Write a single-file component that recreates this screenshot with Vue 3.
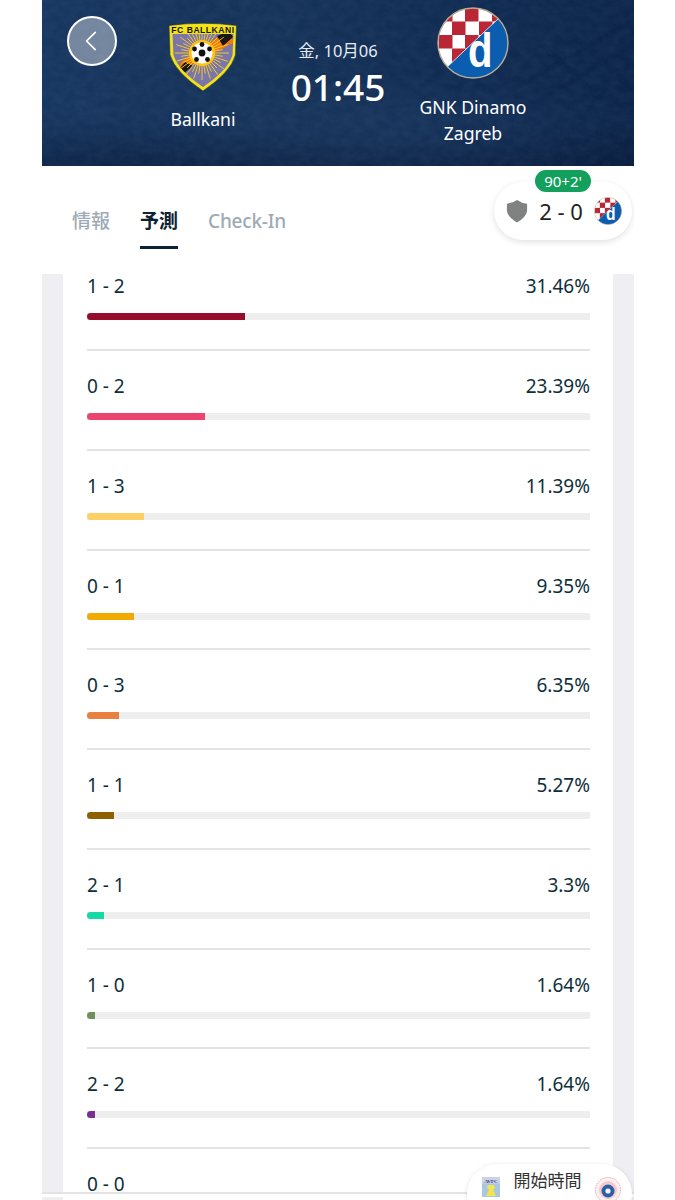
<script setup>
const rows = [
  { score: '1 - 2', pct: 31.46, color: '#970c2c' },
  { score: '0 - 2', pct: 23.39, color: '#ed436f' },
  { score: '1 - 3', pct: 11.39, color: '#ffcf66' },
  { score: '0 - 1', pct: 9.35, color: '#f2a900' },
  { score: '0 - 3', pct: 6.35, color: '#ea8040' },
  { score: '1 - 1', pct: 5.27, color: '#8e6000' },
  { score: '2 - 1', pct: 3.3, color: '#17d9a5' },
  { score: '1 - 0', pct: 1.64, color: '#6c9259' },
  { score: '2 - 2', pct: 1.64, color: '#7b2d94' },
  { score: '0 - 0', pct: 1.2, color: '#888888' }
]
const rays = Array.from({ length: 40 }, (_, i) => {
  const a = (i / 40) * Math.PI * 2
  const r = i % 2 ? 21 : 27
  return {
    x1: 51 + Math.cos(a) * 9,
    y1: 43 + Math.sin(a) * 9,
    x2: 51 + Math.cos(a) * r,
    y2: 43 + Math.sin(a) * r
  }
})
const redCells = [
  [2, 1], [28, 1], [55, 1], [15, 14.5], [42, 14.5], [2, 28], [28, 28], [15, 41.5]
]
</script>

<template>
  <div class="page">
    <header class="hero">
      <svg class="hero-bg" viewBox="0 0 592 166" preserveAspectRatio="none" aria-hidden="true">
        <defs>
          <filter id="grain" x="0" y="0" width="100%" height="100%">
            <feTurbulence type="fractalNoise" baseFrequency="0.09 0.13" numOctaves="4" seed="7" />
            <feColorMatrix values="0 0 0 0 0.55  0 0 0 0 0.68  0 0 0 0 0.9  0.5 0 0 0 -0.12" />
          </filter>
          <filter id="soft"><feGaussianBlur stdDeviation="1.4" /></filter>
        </defs>
        <rect width="592" height="166" filter="url(#grain)" opacity="0.16" />
        <g class="truss" filter="url(#soft)">
          <path d="M470 90 L592 20 M480 110 L592 44 M500 45 L560 100 M530 35 L592 90" />
        </g>
      </svg>

      <button class="back" aria-label="back">
        <svg viewBox="0 0 24 24" width="26" height="26">
          <path d="M15 4 L7 12 L15 20" fill="none" stroke="#fff" stroke-width="1.6" stroke-linecap="round" stroke-linejoin="round" />
        </svg>
      </button>

      <div class="team">
        <svg class="crest-b" viewBox="18 11 68 70" width="68" height="70">
          <defs>
            <clipPath id="shieldBody">
              <path d="M21.5 24 L82.5 24 L81.5 45 Q77 60 52 77 Q27 60 22.5 45 Z" />
            </clipPath>
          </defs>
          <path d="M18 15.5 Q52 11 85.5 15.5 L84.5 45 Q80 62 52 81 Q24 62 19 45 Z" fill="#f2e21a" stroke="#1d2c3a" stroke-width="0.6" />
          <g clip-path="url(#shieldBody)">
            <rect x="18" y="20" width="68" height="62" fill="#7a75aa" />
            <path d="M26 62 L30 52 L74 22 L84 32 Z" fill="#ef7a12" />
            <path d="M27 60 L34 52 L42 56 L32 64 Z M66 26 L78 21 L82 27 L72 36 Z" fill="#1b1712" />
            <g stroke="#ffd21f" stroke-width="0.9">
              <line v-for="(r, i) in rays" :key="i" :x1="r.x1" :y1="r.y1" :x2="r.x2" :y2="r.y2" />
            </g>
            <circle cx="51" cy="43" r="13" fill="#ffc313" />
          </g>
          <circle cx="51" cy="43" r="10.5" fill="#fff" />
          <circle cx="51" cy="43" r="3.4" fill="#111" />
          <g fill="#111">
            <circle cx="51" cy="34.5" r="2.4" />
            <circle cx="43.5" cy="39" r="2.4" />
            <circle cx="58.5" cy="39" r="2.4" />
            <circle cx="45.5" cy="49.5" r="2.4" />
            <circle cx="56.5" cy="49.5" r="2.4" />
          </g>
          <text x="52" y="22.5" text-anchor="middle" class="crest-text">FC BALLKANI</text>
        </svg>
        <div class="team-name">Ballkani</div>
      </div>

      <div class="kickoff">
        <div class="date">金, 10月06</div>
        <div class="time">01:45</div>
      </div>

      <div class="team">
        <svg class="crest-d" viewBox="0 0 72 72" width="72" height="72">
          <defs>
            <clipPath id="dCircle"><circle cx="36" cy="36" r="35" /></clipPath>
          </defs>
          <g id="dinamoMark">
            <g clip-path="url(#dCircle)">
              <rect width="72" height="72" fill="#fff" />
              <rect v-for="(c, i) in redCells" :key="i" :x="c[0]" :y="c[1]" width="13.5" height="13.5" fill="#b92635" />
              <path d="M8 62 L62 11 L76 20 L76 76 L8 76 Z" fill="#0b5db0" />
              <path d="M8 62 L62 11" stroke="#fff" stroke-width="0.8" />
            </g>
            <circle cx="36" cy="36" r="35" fill="none" stroke="#b9ab90" stroke-width="1.4" />
            <text class="d-letter" transform="translate(31 59.5) scale(0.82 1)">d</text>
          </g>
        </svg>
        <div class="team-name">GNK Dinamo<br />Zagreb</div>
      </div>
    </header>

    <nav class="tabs">
      <a class="tab">情報</a>
      <a class="tab active">予測</a>
      <a class="tab latin">Check-In</a>
    </nav>

    <div class="score-pill">
      <span class="minute">90+2'</span>
      <svg viewBox="0 0 24 26" width="22" height="24">
        <path d="M12 1 Q17 4.5 23 5 L23 13 Q22 20 12 25.5 Q2 20 1 13 L1 5 Q7 4.5 12 1 Z" fill="#808282" />
      </svg>
      <span class="score">2 - 0</span>
      <svg viewBox="0 0 72 72" width="28" height="28">
        <use href="#dinamoMark" />
      </svg>
    </div>

    <section class="list">
      <div class="card">
        <div v-for="row in rows" :key="row.score" class="row">
          <span>{{ row.score }}</span>
          <span v-if="row.score !== '0 - 0'">{{ row.pct }}%</span>
          <div class="track">
            <div class="fill" :style="{ width: row.pct + '%', background: row.color }"></div>
          </div>
        </div>
      </div>
    </section>
    <div class="foot-line"></div>
    <div class="foot-strip"><div class="foot-card"></div></div>

    <div class="start-pill">
      <svg viewBox="0 0 18 20" width="18" height="20">
        <rect width="18" height="20" fill="#a9c6e2" />
        <rect width="18" height="6.5" fill="#c9d4e8" />
        <text x="9" y="5.5" text-anchor="middle" class="avfc">AVFC</text>
        <path d="M6 8 L12 8 L13 11 L11 13 L14 19 L4 19 L7 13 L5 11 Z" fill="#f4e548" />
      </svg>
      <span class="start-text">開始時間</span>
      <svg viewBox="0 0 26 26" width="26" height="26">
        <circle cx="13" cy="13" r="12.5" fill="#fbeff0" stroke="#e3a6ac" stroke-dasharray="1.5 1" />
        <circle cx="13" cy="13" r="9" fill="#f3c9cd" />
        <circle cx="13" cy="14" r="6.5" fill="#2b5fa8" />
        <circle cx="13" cy="14" r="2.6" fill="#f4f4f4" />
      </svg>
    </div>
  </div>
</template>

<style scoped>
.page {
  position: relative;
  width: 592px;
  height: 1200px;
  margin-left: 42px;
  overflow: hidden;
  background: #fff;
  font-family: "Noto Sans", "Noto Sans CJK JP", sans-serif;
}
.hero {
  position: relative;
  height: 166px;
  box-sizing: border-box;
  padding-bottom: 13px;
  display: flex;
  justify-content: center;
  align-items: center;
  color: #fff;
  overflow: hidden;
  background:
    radial-gradient(ellipse 260px 60px at 60% 135px, rgba(40, 72, 116, 0.3), transparent),
    linear-gradient(180deg, transparent 72%, rgba(6, 22, 52, 0.5) 100%),
    linear-gradient(100deg, #173660 0%, #153258 40%, #102b52 70%, #0c2448 100%);
}
.hero-bg {
  position: absolute;
  inset: 0;
  width: 100%;
  height: 100%;
}
.truss path {
  fill: none;
  stroke: #08193a;
  stroke-width: 2;
  opacity: 0.28;
}
.back {
  position: absolute;
  left: 25px;
  top: 16px;
  width: 50px;
  height: 50px;
  padding: 0;
  display: flex;
  align-items: center;
  justify-content: center;
  box-sizing: border-box;
  border: 2px solid #fff;
  border-radius: 50%;
  background: rgba(255, 255, 255, 0.4);
}
.team {
  position: relative;
  width: 135px;
  display: flex;
  flex-direction: column;
  align-items: center;
}
.team svg {
  display: block;
}
.crest-text {
  font: 800 8.6px "Liberation Sans", sans-serif;
  letter-spacing: 0.5px;
  fill: #14130c;
}
.d-letter {
  font: 700 49px "Liberation Sans", sans-serif;
  fill: #fff;
}
.team-name {
  margin-top: 15px;
  font-size: 17.6px;
  line-height: 26px;
  text-align: center;
  white-space: nowrap;
}
.kickoff {
  position: relative;
  width: 135px;
  padding-bottom: 4px;
  text-align: center;
}
.date {
  font-size: 16.5px;
  line-height: 20px;
  color: #e6ebf2;
}
.time {
  margin-top: 4px;
  font-size: 37px;
  line-height: 44px;
  font-weight: 500;
}
.tabs {
  height: 108px;
  box-sizing: border-box;
  padding: 44px 0 0 30px;
  display: flex;
  gap: 30px;
  align-items: flex-start;
}
.tab {
  padding-bottom: 14px;
  border-bottom: 3px solid transparent;
  font-size: 19px;
  line-height: 22px;
  font-weight: 500;
  color: #9eaab5;
}
.tab.latin {
  letter-spacing: -0.2px;
}
.tab.active {
  color: #0d2233;
  font-weight: 700;
  border-bottom-color: #0d2233;
}
.score-pill {
  position: absolute;
  left: 452px;
  top: 182px;
  width: 138px;
  height: 58px;
  box-sizing: border-box;
  padding: 0 10px 0 12px;
  display: flex;
  align-items: center;
  justify-content: space-between;
  background: #fff;
  border-radius: 29px;
  box-shadow: 0 2px 6px rgba(0, 0, 0, 0.12);
}
.minute {
  position: absolute;
  left: 41px;
  top: -12px;
  width: 56px;
  height: 22px;
  border-radius: 11px;
  background: #12a05c;
  color: #fff;
  font-size: 15px;
  line-height: 22px;
  text-align: center;
}
.score {
  font-size: 22px;
  color: #222;
  white-space: nowrap;
}
.list {
  height: 918px;
  box-sizing: border-box;
  padding: 0 21px;
  background: #eeeef3;
  overflow: hidden;
}
.card {
  margin-top: -22.75px;
  padding: 0 23px 0 24px;
  background: #fff;
}
.row {
  height: 99.75px;
  box-sizing: border-box;
  padding-top: 23px;
  display: grid;
  grid-template-columns: 1fr auto;
  align-content: start;
  border-bottom: 2px solid #e3e3e3;
  font-size: 19px;
  line-height: 24px;
  color: #0d2f3a;
}
.track {
  grid-column: 1 / -1;
  height: 7px;
  margin-top: 15px;
  background: #eeeeee;
  overflow: hidden;
}
.fill {
  height: 100%;
  border-radius: 4px 0 0 4px;
}
.foot-line {
  height: 2px;
  background: #e3e3e3;
}
.foot-strip {
  height: 8px;
  margin-top: 3px;
  padding: 0 21px;
  background: #eeeef3;
}
.foot-card {
  height: 100%;
  background: #fff;
}
.start-pill {
  position: absolute;
  left: 425px;
  top: 1164px;
  width: 165px;
  height: 60px;
  box-sizing: border-box;
  padding: 13px 11px 0 15px;
  display: flex;
  align-items: flex-start;
  justify-content: space-between;
  background: #fff;
  border-radius: 30px;
  box-shadow: 0 1px 5px rgba(0, 0, 0, 0.12);
}
.start-text {
  margin-top: -8px;
  font-size: 17px;
  line-height: 24px;
  color: #333;
}
.avfc {
  font: 700 5px "Liberation Serif", serif;
  fill: #3a2d7c;
}
</style>

<style>
body {
  background: #fff;
}
</style>
